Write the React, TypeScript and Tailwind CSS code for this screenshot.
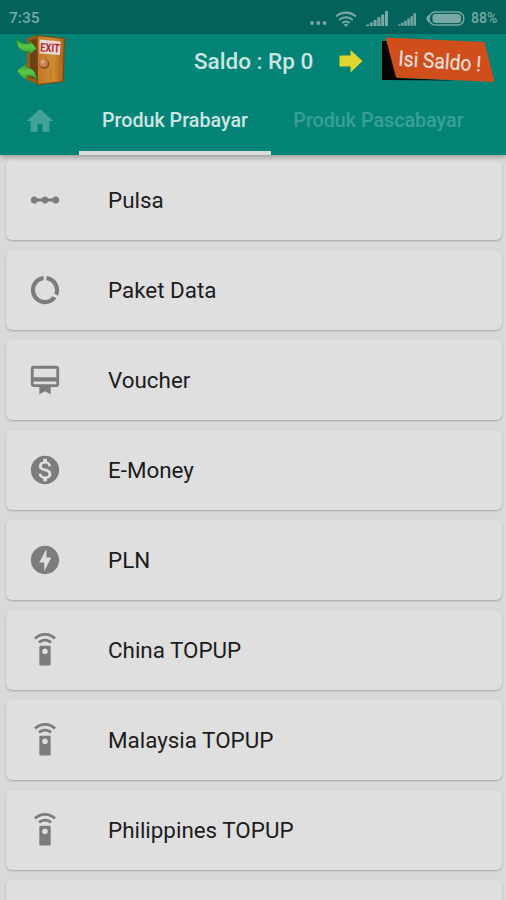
import type { IconType } from "react-icons";
import {
  MdCardMembership, MdDataUsage, MdHome, MdLinearScale,
  MdMonetizationOn, MdOfflineBolt, MdSettingsRemote,
} from "react-icons/md";

interface Product {
  name: string;
  icon: IconType;
}

const products: Product[] = [
  { name: "Pulsa", icon: MdLinearScale },
  { name: "Paket Data", icon: MdDataUsage },
  { name: "Voucher", icon: MdCardMembership },
  { name: "E-Money", icon: MdMonetizationOn },
  { name: "PLN", icon: MdOfflineBolt },
  { name: "China TOPUP", icon: MdSettingsRemote },
  { name: "Malaysia TOPUP", icon: MdSettingsRemote },
  { name: "Philippines TOPUP", icon: MdSettingsRemote },
];

function SignalIcon({ className }: { className?: string }) {
  return (
    <svg viewBox="0 0 22 15" className={className} fill="currentColor">
      <path d="M0 13.5h3V15H0zM3.8 11.5h3V15h-3zM7.6 9h3v6h-3zM11.4 6.3h3V15h-3zM15.2 3.4h3V15h-3zM19 0h3v15h-3z" />
    </svg>
  );
}

function WifiIcon() {
  return (
    <svg viewBox="0 0 22 16" className="h-4 w-[22px]" fill="none" stroke="currentColor" strokeWidth="2.1">
      <path d="M1 5.6a14.5 14.5 0 0 1 20 0" />
      <path d="M4.2 8.9a10 10 0 0 1 13.6 0" />
      <path d="M7.3 12a5.6 5.6 0 0 1 7.4 0" />
      <path d="M11 16l-2.2-2.3a3.2 3.2 0 0 1 4.4 0z" fill="currentColor" stroke="none" />
    </svg>
  );
}

function BatteryIcon() {
  return (
    <svg viewBox="0 0 39 15" className="h-[15px] w-[39px]">
      <rect x="3.2" y="1" width="34.6" height="13" rx="6" fill="none" stroke="currentColor" strokeWidth="1.4" />
      <path d="M3 3.5Q-2 7.5 3 11.5z" fill="currentColor" />
      <rect x="6.5" y="3" width="28.5" height="9" rx="3" fill="currentColor" />
    </svg>
  );
}

function ExitIcon() {
  return (
    <svg viewBox="0 0 50 52" className="h-[52px] w-[50px]">
      <defs>
        <linearGradient id="wood" x1="0" x2="1" y1="0" y2="0">
          <stop offset="0" stopColor="#c17a22" />
          <stop offset="0.6" stopColor="#d08a33" />
          <stop offset="1" stopColor="#a96319" />
        </linearGradient>
        <linearGradient id="leaf" x1="0" x2="0" y1="0" y2="1">
          <stop offset="0" stopColor="#2b8a30" />
          <stop offset="0.5" stopColor="#5cc746" />
          <stop offset="1" stopColor="#3aa537" />
        </linearGradient>
      </defs>
      <path d="M11 4l11-3v49l-11-4z" fill="#9a5b1b" />
      <path d="M14 6l8-2v42l-8-2z" fill="#6b4016" />
      <path d="M21 1.5l27.5 3-1.5 43-25.5 3z" fill="url(#wood)" stroke="#7d4612" strokeWidth="1.2" />
      <path d="M44 22l-1 25M35 34l-1 14M30 22v7" stroke="#b0701f" strokeWidth="0.8" />
      <path d="M23.5 5.5l21 2-.6 13.5-20.4-1.5z" fill="#e6d8d2" />
      <text x="24.2" y="17.5" textLength="19.5" lengthAdjust="spacingAndGlyphs" transform="rotate(3 24 14)" fill="#b51f33" className="font-['Roboto',sans-serif] text-[12px] font-bold">EXIT</text>
      <circle cx="28.3" cy="30" r="5" fill="#8f5228" />
      <circle cx="27.6" cy="29" r="4.1" fill="#c68356" />
      <circle cx="26.7" cy="27.7" r="1.6" fill="#e2b18d" />
      <path d="M.3 4C3 8.500 8 10.500 14 9.500V6.500l6.500 8-6 5.500-1-2.500C7 18.500 0 15 .3 4z" fill="url(#leaf)" stroke="#237a2b" strokeWidth="0.5" />
      <path d="M1 36.500L10.500 29l.5 4.500C17 34 20.500 39 20.500 46 17.500 42 15 41.500 11 41.500v4.500C7 44.500 4 41 1 36.500z" fill="url(#leaf)" stroke="#237a2b" strokeWidth="0.5" />
    </svg>
  );
}

function StatusBar() {
  return (
    <div className="flex h-[34px] shrink-0 items-center bg-[#03635b] pt-[3px] pl-[9px] pr-2 text-[#78a9a4]">
      <span className="text-[15.5px] font-medium">7:35</span>
      <div className="ml-auto flex items-center">
        <svg viewBox="0 0 17 4" className="mt-2 mr-2 h-1 w-[17px]" fill="currentColor">
          <circle cx="2" cy="2" r="1.9" />
          <circle cx="8.3" cy="2" r="1.9" />
          <circle cx="14.6" cy="2" r="1.9" />
        </svg>
        <WifiIcon />
        <SignalIcon className="ml-[9px] h-[15px] w-[22px]" />
        <SignalIcon className="mt-0.5 ml-2.5 h-[13px] w-[18px]" />
        <span className="ml-2.5"><BatteryIcon /></span>
        <span className="ml-1.5 w-[27px] text-[14px] font-medium">88%</span>
      </div>
    </div>
  );
}

function Header() {
  return (
    <header className="relative z-10 shrink-0 bg-[#048477] shadow-[0_2px_5px_rgba(0,0,0,0.3)]">
      <div className="flex h-[52px] items-start pl-4 pr-[10px]">
        <ExitIcon />
        <span className="mt-[13px] ml-[128px] w-[120px] whitespace-nowrap text-[22.5px] leading-7 font-medium text-[#cce5e2]">
          Saldo : Rp 0
        </span>
        <svg viewBox="0 0 24 24" className="mt-[15px] ml-[25px] size-6" fill="#dfd52f">
          <path d="M.5 6.5h11V1L23.5 12 11.5 23.5v-6H.5z" />
        </svg>
        <svg viewBox="0 0 114 48" className="mt-0.5 ml-auto h-12 w-[114px]">
          <path d="M0 5h5l10 37 60 2.5L0 44z" fill="#070504" />
          <path d="M3.5 1.5l99 4.5L112.5 46 14 41.5z" fill="#cf4e1b" />
          <text x="16" y="29.5" textLength="83" lengthAdjust="spacingAndGlyphs" transform="rotate(4 15 29)" fill="#ecdcd6" stroke="#ecdcd6" strokeWidth="0.3" className="font-['Roboto',sans-serif] text-[21px]">Isi Saldo !</text>
        </svg>
      </div>
      <nav className="flex h-[69px]">
        <button className="flex w-[79px] items-center justify-center text-[#43a197]">
          <MdHome className="size-8" />
        </button>
        <button className="w-48 border-b-4 border-[#dcdedd] pt-1 text-[19.7px] font-medium whitespace-nowrap text-[#cce5e2]">
          Produk Prabayar
        </button>
        <button className="flex-1 border-b-4 border-transparent pt-1 pr-5 text-[19.7px] font-medium whitespace-nowrap text-[#38a095]">
          Produk Pascabayar
        </button>
      </nav>
    </header>
  );
}

export default function App() {
  return (
    <div className="flex h-[900px] w-full flex-col overflow-hidden bg-[#d9d9d9] font-['Roboto',sans-serif]">
      <StatusBar />
      <Header />
      <main className="flex flex-col gap-2.5 pt-[5px] pr-1 pl-1.5">
        {products.map(({ name, icon: Icon }) => (
          <div
            key={name}
            className="flex h-20 shrink-0 items-center rounded-md bg-[#dfdfdf] pl-[22px] shadow-[0_1px_2px_rgba(0,0,0,0.24)]"
          >
            <Icon className="size-[34px] text-[#7c7c7c]" />
            <span className="ml-[46px] pt-0.5 text-[22.4px] text-[#1c1c1c]">{name}</span>
          </div>
        ))}
        <div className="h-20 shrink-0 rounded-md bg-[#dfdfdf] shadow-[0_1px_2px_rgba(0,0,0,0.24)]" />
      </main>
    </div>
  );
}
